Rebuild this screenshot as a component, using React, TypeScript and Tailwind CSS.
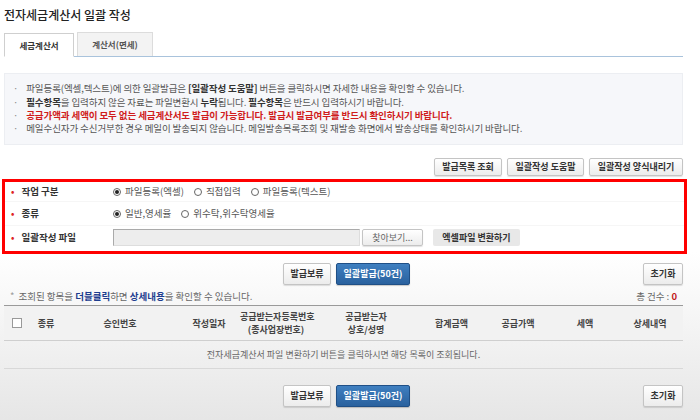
import React from 'react';

const font = { fontFamily: '"Noto Sans CJK KR", "Noto Sans", sans-serif' };

const GrayButton: React.FC<{ children: React.ReactNode; className?: string }> = ({
  children,
  className = '',
}) => (
  <button
    className={`flex items-center justify-center whitespace-nowrap rounded-[2px] border border-[#c4c4c4] bg-gradient-to-b from-white to-[#ececec] px-0 text-[9px] font-bold text-[#333] shadow-[0_1px_1px_rgba(0,0,0,0.12)] ${className}`}
  >
    {children}
  </button>
);

const BlueButton: React.FC<{ children: React.ReactNode }> = ({ children }) => (
  <button className="flex h-[22px] w-[74px] items-center justify-center whitespace-nowrap rounded-[2px] border border-[#1f4f86] bg-gradient-to-b from-[#3f7fc0] to-[#2a619e] text-[9px] font-bold text-white shadow-[0_1px_1px_rgba(0,0,0,0.2)]">
    {children}
  </button>
);

const Radio: React.FC<{ checked?: boolean; label: string }> = ({ checked, label }) => (
  <span className="mr-[10px] flex items-center">
    <span className="mr-[4px] flex h-[8px] w-[8px] items-center justify-center rounded-full border border-[#666] bg-white">
      {checked && <span className="h-[4px] w-[4px] rounded-full bg-[#222]" />}
    </span>
    <span className="text-[9.5px] text-[#555]">{label}</span>
  </span>
);

const FormRow: React.FC<{ label: string; h: string; last?: boolean; children: React.ReactNode }> = ({
  label,
  h,
  last,
  children,
}) => (
  <div className={`flex items-center ${h} ${last ? '' : 'border-b border-[#f6f6f6]'}`}>
    <div className="flex w-[108px] items-center pl-[6px]">
      <span className="mr-[7px] text-[9px] font-bold text-[#d22]">•</span>
      <span className="text-[9.5px] font-bold text-[#333]">{label}</span>
    </div>
    <div className="flex items-center">{children}</div>
  </div>
);

const ActionRow: React.FC = () => (
  <div className="grid h-[22px] grid-cols-[1fr_auto_1fr] items-center">
    <div />
    <div className="flex gap-[5px] pl-[6px]">
      <GrayButton className="h-[22px] w-[48px]">발급보류</GrayButton>
      <BlueButton>일괄발급(50건)</BlueButton>
    </div>
    <div className="flex justify-end">
      <GrayButton className="h-[22px] w-[40px]">초기화</GrayButton>
    </div>
  </div>
);

const cols = 'grid grid-cols-[26px_32px_116px_62px_72px_108px_63px_70px_64px_66px]';

export default function App() {
  return (
    <div
      style={font}
      className="flex h-[420px] w-[700px] flex-col overflow-hidden bg-gradient-to-b from-white from-60% to-[#e6e6e6] pl-[4px] pr-[17px] pt-[6px]"
    >
      <h1 className="h-[18px] text-[12px] font-medium leading-[18px] text-[#222]">전자세금계산서 일괄 작성</h1>

      {/* tabs */}
      <div className="mt-[9px] flex h-[24px] items-end border-b border-[#a9c3dc]">
        <div className="-mb-px flex h-[24px] w-[70px] items-center justify-center border border-b-white border-[#cfcfcf] bg-white text-[8.5px] font-bold text-[#333]">
          세금계산서
        </div>
        <div className="ml-[3px] flex h-[24px] w-[76px] items-center justify-center border border-b-0 border-[#dcdcdc] bg-[#f3f3f3] text-[8.5px] font-bold text-[#555]">
          계산서(면세)
        </div>
      </div>

      {/* notice */}
      <div className="mt-[16px] flex h-[72px] flex-col justify-center border border-[#eceef2] bg-[#f6f7fa] pl-[8px] text-[9.5px] leading-[13.3px] tracking-[-0.1px] text-[#555]">
        <p>
          <span className="mr-[8px] text-[#888]">·</span>파일등록(엑셀,텍스트)에 의한 일괄발급은{' '}
          <b className="text-[#333]">[일괄작성 도움말]</b> 버튼을 클릭하시면 자세한 내용을 확인할 수 있습니다.
        </p>
        <p>
          <span className="mr-[8px] text-[#888]">·</span>
          <b className="text-[#333]">필수항목</b>을 입력하지 않은 자료는 파일변환시 <b className="text-[#333]">누락</b>됩니다.{' '}
          <b className="text-[#333]">필수항목</b>은 반드시 입력하시기 바랍니다.
        </p>
        <p className="font-bold text-[#d01c1c]">
          <span className="mr-[8px] font-normal text-[#888]">·</span>공급가액과 세액이 모두 없는 세금계산서도 발급이
          가능합니다. 발급시 발급여부를 반드시 확인하시기 바랍니다.
        </p>
        <p>
          <span className="mr-[8px] text-[#888]">·</span>메일수신자가 수신거부한 경우 메일이 발송되지 않습니다.
          메일발송목록조회 및 재발송 화면에서 발송상태를 확인하시기 바랍니다.
        </p>
      </div>

      {/* top buttons */}
      <div className="mt-[13px] flex justify-end gap-[5px]">
        <GrayButton className="h-[18px] w-[68px]">발급목록 조회</GrayButton>
        <GrayButton className="h-[18px] w-[77px]">일괄작성 도움말</GrayButton>
        <GrayButton className="h-[18px] w-[94px]">일괄작성 양식내리기</GrayButton>
      </div>

      {/* form */}
      <div className="-ml-[2px] -mr-[4px] mt-[3px] border-[3px] border-[#ff0000] bg-white pb-[2px]">
        <FormRow label="작업 구분" h="h-[20px]">
          <Radio checked label="파일등록(엑셀)" />
          <Radio label="직접입력" />
          <Radio label="파일등록(텍스트)" />
        </FormRow>
        <FormRow label="종류" h="h-[24px]">
          <Radio checked label="일반,영세율" />
          <Radio label="위수탁,위수탁영세율" />
        </FormRow>
        <FormRow label="일괄작성 파일" h="h-[23px]" last>
          <div className="h-[17px] w-[247px] border border-[#aaa] border-b-[#ddd] border-r-[#ddd] bg-[#ededed]" />
          <GrayButton className="ml-[2px] h-[17px] w-[61px] font-normal text-[#666]">찾아보기...</GrayButton>
          <button className="ml-[10px] flex h-[17px] w-[87px] items-center justify-center whitespace-nowrap rounded-[2px] bg-[#e8e8e8] text-[9px] font-bold text-[#333]">
            엑셀파일 변환하기
          </button>
        </FormRow>
      </div>

      {/* middle actions */}
      <div className="mt-[9px]">
        <ActionRow />
      </div>

      <div className="mt-[3px] flex h-[17px] items-center justify-between pl-[6px] pr-[6px] text-[9.5px] text-[#666]">
        <span>
          <span className="mr-[4px] text-[#999]">*</span>조회된 항목을{' '}
          <b className="text-[#1d3d8f]">더블클릭</b>하면 <b className="text-[#1d3d8f]">상세내용</b>을 확인할 수 있습니다.
        </span>
        <span>
          총 건수 : <b className="text-[#c21b1b]">0</b>
        </span>
      </div>

      {/* table */}
      <div className="border-t border-[#9a9a9a]">
        <div className={`${cols} h-[35px] items-center border-b border-[#cfcfcf] bg-[#f2f2f2] text-center text-[9px] font-bold leading-[13px] text-[#444]`}>
          <div className="flex justify-center">
            <span className="h-[10px] w-[10px] border border-[#999] bg-white" />
          </div>
          <div>종류</div>
          <div>승인번호</div>
          <div>작성일자</div>
          <div className="whitespace-nowrap">
            공급받는자등록번호
            <br />
            (종사업장번호)
          </div>
          <div>
            공급받는자
            <br />
            상호/성명
          </div>
          <div>합계금액</div>
          <div>공급가액</div>
          <div>세액</div>
          <div>상세내역</div>
        </div>
        <div className="flex h-[28px] items-center justify-center border-b border-[#d8d8d8] text-[9px] text-[#666]">
          전자세금계산서 파일 변환하기 버튼을 클릭하시면 해당 목록이 조회됩니다.
        </div>
      </div>

      <div className="mt-[16px]">
        <ActionRow />
      </div>
    </div>
  );
}
